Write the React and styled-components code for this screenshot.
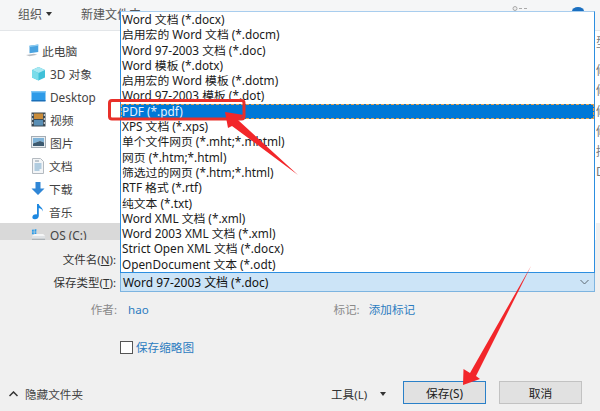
import React from "react";
import styled, { createGlobalStyle } from "styled-components";

const Global = createGlobalStyle`
  html, body { margin: 0; padding: 0; background: #f0f0f0; }
  body { font-family: "Noto Sans", "Noto Sans CJK SC", sans-serif; overflow: hidden; }
  * { box-sizing: border-box; }
`;
const CJK = `"Noto Sans", "Noto Sans CJK SC", sans-serif`;
const Dialog = styled.div`
  position: relative; width: 600px; height: 411px; overflow: hidden;
  display: flex; flex-direction: column; background: #f0f0f0; color: #333;
  font-family: ${CJK};
`;
const Toolbar = styled.div`
  height: 31px; flex: none; background: #f5f6f7; border-bottom: 1px solid #e3e6e9;
  display: flex; align-items: center; padding: 0 0 2px 18px; gap: 29px; font-size: 12px; color: #555;
`;
const ToolItem = styled.span`display: inline-flex; align-items: center; gap: 4px;`;
const Caret = styled.i`
  width: 0; height: 0; border-left: 3px solid transparent; border-right: 3px solid transparent;
  border-top: 4px solid #333; display: inline-block;
`;
const Body = styled.div`height: 209px; flex: none; display: flex; justify-content: space-between; background: #fff;`;
const Sidebar = styled.div`width: 120px; flex: none; display: flex; flex-direction: column; padding-top: 8px;`;
const NavItem = styled.div`
  height: 23px; display: flex; align-items: center; flex: none;
  padding-left: ${p => (p.$root ? "25px" : "31px")}; gap: ${p => (p.$root ? "1px" : "4px")};
  font-size: 11.8px; color: #444;
  background: ${p => (p.$active ? "#d9d9d9" : "transparent")};
`;
const FileColumn = styled.div`
  width: 4px; flex: none; overflow: hidden; display: flex; flex-direction: column;
  font-size: 12px; color: #777; line-height: 20px; padding-top: 2px;
`;
const ColHead = styled.div`height: 28px; flex: none; white-space: nowrap;`;
const ColCell = styled.div`height: 20.3px; flex: none; white-space: nowrap;`;
const ColFill = styled.div`margin-top: auto; height: 17px; flex: none; background: #f0f0f0;`;
const Form = styled.div`
  flex: 1; display: flex; flex-direction: column; background: #f0f0f0; position: relative;
`;
const FieldRow = styled.div`
  height: ${p => p.$h}px; padding-top: ${p => p.$pt || 0}px; display: flex; align-items: center; flex: none; font-size: 12px; color: #333;
`;
const FieldLabel = styled.div`width: 116px; text-align: right; flex: none; font-size: 11.5px;`;
const NameInput = styled.div`flex: 1; height: 100%; background: transparent;`;
const TypeSelect = styled.div`
  width: 475px; height: 20px; margin-left: 4px; display: flex; align-items: center; justify-content: space-between;
  background: #cce4f7; border: 1px solid #7db4e0; padding: 0 5px 0 2px; font-size: 11.95px; color: #111;
`;
const Meta = styled.div`
  height: 20px; margin-top: 7px; flex: none; display: flex; align-items: center; font-size: 11.6px;
`;
const MetaLabel = styled.span`color: #8a8a8a; width: ${p => p.$w}px; text-align: right; flex: none;`;
const Link = styled.span`color: #2c7cc0; margin-left: ${p => p.$ml || 0}px; font-size: 11.6px;`;
const Thumb = styled.label`
  display: flex; align-items: center; gap: 3px; margin: 20px 0 0 120px; height: 16px; flex: none;
`;
const Box = styled.span`width: 13px; height: 13px; background: #fff; border: 1px solid #555; flex: none;`;
const Footer = styled.div`
  margin-top: auto; height: 50px; flex: none; display: flex; align-items: center; padding: 13px 0 0 9px; font-size: 11.6px; color: #444;
`;
const Hide = styled.div`display: flex; align-items: center; gap: 7px; width: 322px; flex: none; padding-top: 3px;`;
const Tools = styled.div`display: flex; align-items: center; gap: 13px; width: 72px; flex: none; color: #333; padding-top: 2px;`;
const Btn = styled.button`
  width: 83px; height: 23px; margin-right: ${p => (p.$primary ? 13 : 0)}px;
  flex: none; padding: 0; background: #e1e1e1; font: 11.8px ${CJK}; color: #222;
  border: 1.5px solid ${p => (p.$primary ? "#2a80c8" : "#c2c2c2")};
`;
const Dropdown = styled.div`
  position: absolute; left: 120px; top: 11px; width: 475px; height: 262px;
  background: #fff; border: 1px solid #2c8ee0; border-top-color: #a8cdee; display: flex; flex-direction: column;
`;
const Option = styled.div`
  height: 15.3px; line-height: 15.3px; flex: none; padding-left: 1px; font-size: 11.8px; white-space: nowrap;
  color: ${p => (p.$sel ? "#e8f2fb" : "#1a1a1a")}; background: ${p => (p.$sel ? "#0078d7" : "transparent")};
  outline: ${p => (p.$sel ? "1px dashed #e0a050" : "none")}; outline-offset: -1px;
`;
const ViewIcon = styled.svg`position: absolute; left: 512px; top: 6px;`;
const HelpCap = styled.svg`position: absolute; left: 572px; top: 7px;`;
const OverlaySvg = styled.svg`position: absolute; left: 0; top: 0; pointer-events: none;`;

const options = [
  "Word 文档 (*.docx)", "启用宏的 Word 文档 (*.docm)", "Word 97-2003 文档 (*.doc)", "Word 模板 (*.dotx)",
  "启用宏的 Word 模板 (*.dotm)", "Word 97-2003 模板 (*.dot)", "PDF (*.pdf)", "XPS 文档 (*.xps)",
  "单个文件网页 (*.mht;*.mhtml)", "网页 (*.htm;*.html)", "筛选过的网页 (*.htm;*.html)", "RTF 格式 (*.rtf)",
  "纯文本 (*.txt)", "Word XML 文档 (*.xml)", "Word 2003 XML 文档 (*.xml)", "Strict Open XML 文档 (*.docx)",
  "OpenDocument 文本 (*.odt)",
];
const cells = ["修", "修", "修", "修", "描", "D"];

const PcIcon = () => (
  <svg width="16" height="14" viewBox="0 0 18 16">
    <path d="M5 2l10-1.5v8.5l-10 1.5z" fill="#4aa3e0" />
    <path d="M5 2l10-1.5v1.5l-10 1.5z" fill="#8ecdf2" />
    <path d="M1 12.5l9-1.5 4 1.2-9 1.8z" fill="#b9bec4" />
  </svg>
);
const CubeIcon = () => (
  <svg width="15" height="15" viewBox="0 0 15 15">
    <path d="M7.5 1L14 4v7.5L7.5 14.5 1 11.5V4z" fill="#3fc0d8" />
    <path d="M7.5 1L14 4 7.5 7 1 4z" fill="#a7e8f2" />
    <path d="M7.5 7v7.5L1 11.5V4z" fill="#7adcea" />
  </svg>
);
const DesktopIcon = () => (
  <svg width="15" height="13" viewBox="0 0 15 13">
    <rect x="0.5" y="1" width="14" height="10" fill="#2f9be8" />
    <rect x="0.5" y="1" width="14" height="1.5" fill="#7cc6f5" />
    <rect x="0.5" y="10" width="14" height="1.5" fill="#1a6fb8" />
  </svg>
);
const VideoIcon = () => (
  <svg width="15" height="15" viewBox="0 0 15 15">
    <rect x="0.5" y="0.5" width="14" height="14" fill="#3b4a55" />
    <rect x="3" y="1.5" width="9" height="5.5" fill="#c98c3a" />
    <rect x="3" y="8" width="9" height="5.5" fill="#5a8fb5" />
    <path d="M1.2 2h1v2h-1zM1.2 6h1v2h-1zM1.2 10h1v2h-1zM12.8 2h1v2h-1zM12.8 6h1v2h-1zM12.8 10h1v2h-1z" fill="#e8e8e8" />
  </svg>
);
const PicIcon = () => (
  <svg width="15" height="13" viewBox="0 0 15 13">
    <rect x="0.5" y="0.5" width="14" height="11" fill="#e8edf1" stroke="#a5adb4" />
    <path d="M2 2h11v4.5L9 5 2 7.5z" fill="#7fb3d8" />
    <path d="M2 7.5L9 5l4 1.5V10H2z" fill="#3d5a70" />
  </svg>
);
const DocIcon = () => (
  <svg width="14" height="16" viewBox="0 0 14 16">
    <path d="M1.5.5h8l3 3v12h-11z" fill="#f3f5f7" stroke="#b4bac0" />
    <path d="M3.5 6h7M3.5 8h7M3.5 10h7M3.5 12h5" stroke="#6fa3c8" />
    <path d="M4 3h4" stroke="#8a9aa6" />
  </svg>
);
const DownIcon = () => (
  <svg width="14" height="15" viewBox="0 0 14 15">
    <path d="M4.5 1h5v6.5H13.5L7 14 .5 7.5H4.5z" fill="#2f86d6" />
  </svg>
);
const MusicIcon = () => (
  <svg width="14" height="17" viewBox="0 0 14 17">
    <path d="M6 1h1.8c.4 2.5 4.5 3.5 4 7.5-.7-2-2.2-3-4-3.400V13c0 2-2 3.300-4 3.300S1 15 1.5 13.500 4 11 6 11.500z" fill="#1e88e0" />
  </svg>
);
const DriveIcon = () => (
  <svg width="15" height="14" viewBox="0 0 16 14">
    <path d="M1 1.500l2-.4v2.300H1zM3.700 1l2-.4v2.800H3.700zM1 4.100h2v2.200H1zM3.700 4.100h2v2.200H3.700z" fill="#2a9be8" />
    <path d="M1 8h14v3.500H1z" fill="#dfe2e5" />
    <path d="M1 8l3-2h9l2 2z" fill="#f4f5f6" />
    <path d="M1 11h14v1H1z" fill="#9aa0a6" />
  </svg>
);
const ChevronDown = () => (
  <svg width="9" height="6" viewBox="0 0 9 6"><path d="M.5 1l4 4 4-4" fill="none" stroke="#5f6a75" strokeWidth="1" /></svg>
);
const ChevronUp = () => (
  <svg width="9" height="6" viewBox="0 0 9 6"><path d="M.5 5l4-4 4 4" fill="none" stroke="#333" strokeWidth="1.5" /></svg>
);

export default function App() {
  return (
    <Dialog>
      <Global />
      <Toolbar>
        <ToolItem>组织 <Caret /></ToolItem>
        <ToolItem>新建文件夹</ToolItem>
      </Toolbar>
      <Body>
        <Sidebar>
          <NavItem $root><PcIcon />此电脑</NavItem>
          <NavItem><CubeIcon />3D 对象</NavItem>
          <NavItem><DesktopIcon />Desktop</NavItem>
          <NavItem><VideoIcon />视频</NavItem>
          <NavItem><PicIcon />图片</NavItem>
          <NavItem><DocIcon />文档</NavItem>
          <NavItem><DownIcon />下载</NavItem>
          <NavItem><MusicIcon />音乐</NavItem>
          <NavItem $active><DriveIcon />OS (C:)</NavItem>
        </Sidebar>
        <FileColumn>
          <ColHead>型</ColHead>
          {cells.map((c, i) => <ColCell key={i}>{c}</ColCell>)}
          <ColFill />
        </FileColumn>
      </Body>
      <Form>
        <FieldRow $h={32} $pt={6}><FieldLabel>文件名(<u>N</u>):</FieldLabel><NameInput /></FieldRow>
        <FieldRow $h={20}>
          <FieldLabel>保存类型(<u>T</u>):</FieldLabel>
          <TypeSelect>Word 97-2003 文档 (*.doc)<ChevronDown /></TypeSelect>
        </FieldRow>
        <Meta>
          <MetaLabel $w={117}>作者:</MetaLabel><Link $ml={11}>hao</Link>
          <MetaLabel $w={211}>标记:</MetaLabel><Link $ml={9}>添加标记</Link>
        </Meta>
        <Thumb><Box /><Link>保存缩略图</Link></Thumb>
        <Footer>
          <Hide><ChevronUp />隐藏文件夹</Hide>
          <Tools>工具(L)<Caret /></Tools>
          <Btn $primary>保存(S)</Btn>
          <Btn>取消</Btn>
        </Footer>
      </Form>
      <ViewIcon width="16" height="5" viewBox="0 0 16 5">
        <circle cx="3" cy="2.5" r="2" fill="#eee" stroke="#aaa" />
        <path d="M7 2.5h3M12 2.5h3" stroke="#aaa" />
      </ViewIcon>
      <HelpCap width="12" height="4" viewBox="0 0 12 4"><path d="M0 4a6 4 0 0 1 12 0z" fill="#1a6fc0" /></HelpCap>
      <Dropdown>
        {options.map((o, i) => <Option key={o} $sel={i === 6}>{o}</Option>)}
      </Dropdown>
      <OverlaySvg width="600" height="411" viewBox="0 0 600 411">
        <rect x="109.5" y="100.5" width="134.5" height="18.5" rx="2.5" fill="none" stroke="#e8302a" strokeWidth="3" />
        <path d="M225 112L244 115 238 120 298 175 232 126 228 128z" fill="#f2262a" />
        <path d="M463 385L463.500 369 470 373 531 266 476 376 480 379z" fill="#f2262a" />
      </OverlaySvg>
    </Dialog>
  );
}
